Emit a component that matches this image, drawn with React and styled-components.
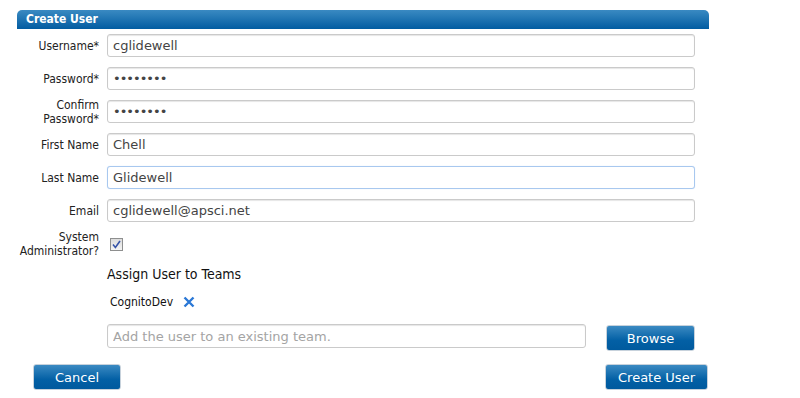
import React from 'react';
import styled, { createGlobalStyle } from 'styled-components';

/* styles start */
const GlobalStyle = createGlobalStyle`
  html, body {
    margin: 0;
    padding: 0;
    background: #fff;
  }
  body {
    font-family: "DejaVu Sans Condensed", "DejaVu Sans", sans-serif;
    color: #222;
  }
`;

const Panel = styled.div`
  width: 692px;
  margin: 10px 0 0 17px;
`;

const Header = styled.div`
  height: 19px;
  line-height: 19px;
  padding-left: 9px;
  border-radius: 5px 5px 0 0;
  background: linear-gradient(#3a8ac2, #025ca1);
  color: #fff;
  font-weight: bold;
  font-size: 12px;
`;

const Row = styled.div`
  display: grid;
  grid-template-columns: 82px 1fr;
  column-gap: 8px;
  align-items: center;
  height: 33px;
  padding-right: 14px;
`;

const Label = styled.label`
  text-align: right;
  font-size: 12px;
  line-height: 14px;
  color: #222;
`;

const TextInput = styled.input`
  box-sizing: border-box;
  width: ${(p) => p.$width || '100%'};
  height: ${(p) => p.$height || '23px'};
  margin: 0;
  padding: 0 5px;
  border: 1px solid ${(p) => (p.$focused ? '#a8c8ef' : '#cacaca')};
  border-radius: 3px;
  box-shadow: ${(p) => (p.$focused ? '0 0 1px #c6dcf6' : 'inset 0 1px 1px #e6e6e6')};
  font-family: "DejaVu Sans", sans-serif;
  font-size: 13px;
  letter-spacing: ${(p) => (p.type === 'password' ? '-1px' : 'normal')};
  color: #444;
  outline: none;
  &::placeholder {
    color: #a4a4a4;
  }
`;

const CheckBox = styled.span`
  display: inline-flex;
  align-items: center;
  justify-content: center;
  box-sizing: border-box;
  width: 13px;
  height: 13px;
  margin-left: 3px;
  border: 1px solid #8e8f8f;
  background: linear-gradient(#dcdcdc, #f4f4f4);
`;

const Section = styled.div`
  padding-left: 90px;
`;

const SectionTitle = styled.div`
  margin-top: 5px;
  height: 18px;
  line-height: 18px;
  font-size: 14px;
  color: #111;
`;

const TeamChip = styled.div`
  display: flex;
  align-items: center;
  gap: 10px;
  margin-top: 10px;
  height: 18px;
  padding-left: 3px;
  font-size: 12px;
  color: #111;
`;

const RemoveIcon = styled.svg`
  display: block;
  width: 12px;
  height: 12px;
`;

const SearchRow = styled.div`
  display: flex;
  align-items: flex-start;
  gap: 20px;
  margin-top: 13px;
`;

const Button = styled.button`
  box-sizing: border-box;
  width: ${(p) => p.$width};
  height: 26px;
  margin-top: ${(p) => p.$offset || '0'};
  padding: 1px 0 0;
  border: 1px solid #c7d2dc;
  border-radius: 3px;
  background: linear-gradient(#3b8ac2, #0360a5 60%, #005a9e);
  color: #fff;
  font-family: "DejaVu Sans", sans-serif;
  font-size: 13px;
  cursor: pointer;
`;

const Footer = styled.div`
  display: flex;
  justify-content: space-between;
  margin-top: 13px;
  padding: 0 1px 0 16px;
`;
/* styles end */

const fields = [
  { label: 'Username*', value: 'cglidewell' },
  { label: 'Password*', value: '12345678', type: 'password' },
  { label: 'Confirm Password*', value: '12345678', type: 'password' },
  { label: 'First Name', value: 'Chell' },
  { label: 'Last Name', value: 'Glidewell', focused: true },
  { label: 'Email', value: 'cglidewell@apsci.net' },
];

export default function App() {
  return (
    <>
      <GlobalStyle />
      <Panel>
        <Header>Create User</Header>
        {fields.map((f) => (
          <Row key={f.label}>
            <Label>{f.label}</Label>
            <TextInput
              type={f.type || 'text'}
              defaultValue={f.value}
              $focused={f.focused}
            />
          </Row>
        ))}
        <Row>
          <Label>System Administrator?</Label>
          <div>
            <CheckBox>
              <svg width="9" height="9" viewBox="0 0 9 9">
                <path d="M1 4.6 L3.4 7.4 L8 1" fill="none" stroke="#3553a8" strokeWidth="1.6" />
              </svg>
            </CheckBox>
          </div>
        </Row>
        <Section>
          <SectionTitle>Assign User to Teams</SectionTitle>
          <TeamChip>
            CognitoDev
            <RemoveIcon viewBox="0 0 12 12">
              <path d="M1.5 1.5 L10.5 10.5 M10.5 1.5 L1.5 10.5" stroke="#2b78d6" strokeWidth="2.4" />
            </RemoveIcon>
          </TeamChip>
          <SearchRow>
            <TextInput
              $width="479px"
              $height="24px"
              placeholder="Add the user to an existing team."
            />
            <Button $width="89px" $offset="1px">Browse</Button>
          </SearchRow>
        </Section>
        <Footer>
          <Button $width="88px">Cancel</Button>
          <Button $width="103px">Create User</Button>
        </Footer>
      </Panel>
    </>
  );
}
